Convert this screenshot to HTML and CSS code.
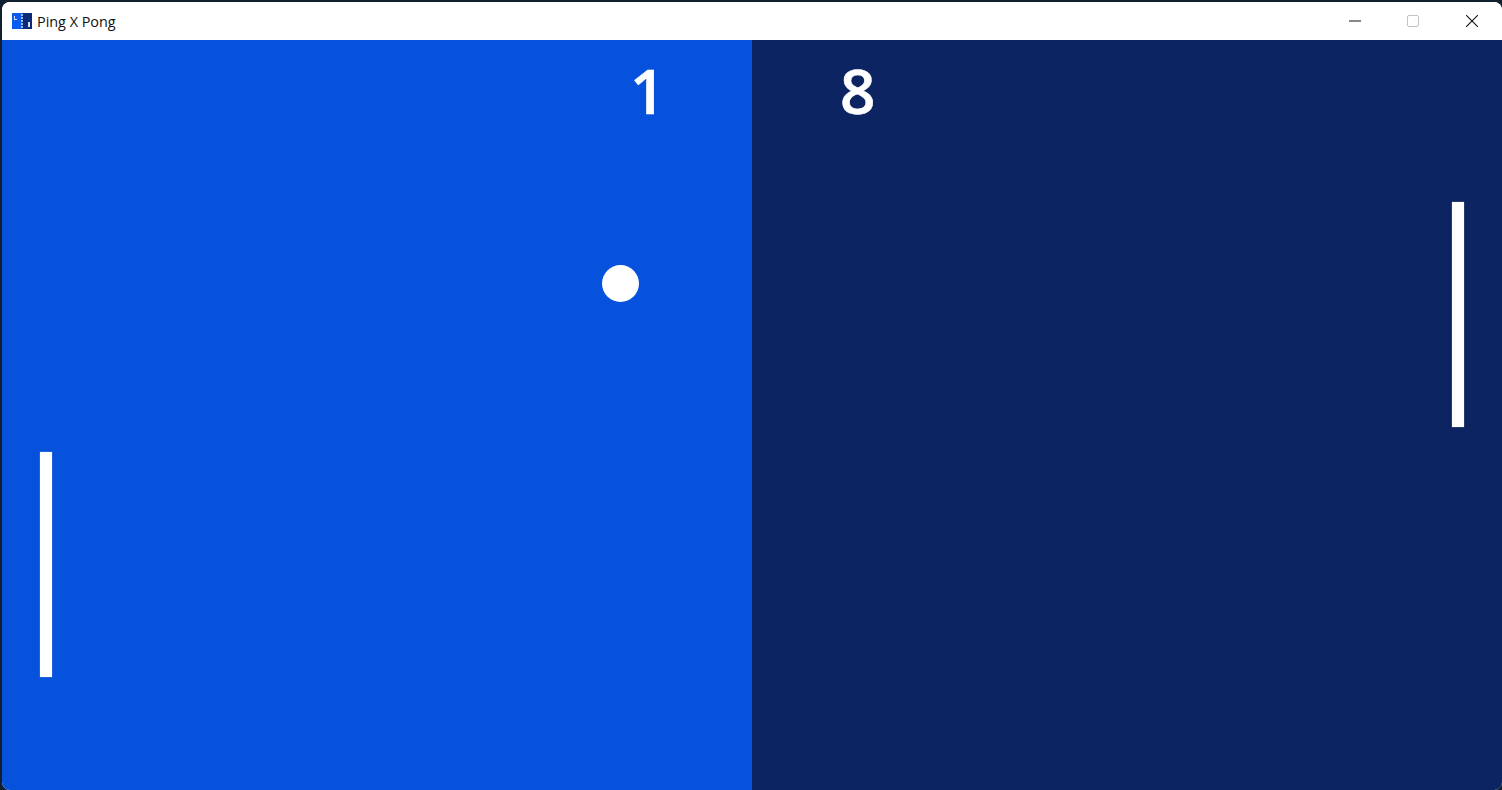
FILE: index.html
```html
<!DOCTYPE html>
<html>
<head>
  <meta charset="utf-8">
  <meta name="viewport" content="width=device-width">
  <title>Ping X Pong</title>
  <link rel="stylesheet" href="styles.css">
</head>
<body>

  <div class="window">
    <div class="titlebar">
      <svg class="app-icon" width="20" height="16" viewBox="0 0 20 16">
        <rect width="10" height="16" fill="#0a5cf0"/>
        <rect x="10" width="10" height="16" fill="#0c2a78"/>
        <rect x="2" y="3" width="1" height="4" fill="#cfe0ff"/>
        <rect x="3" y="6" width="2" height="1" fill="#cfe0ff"/>
        <rect x="16" y="9" width="2" height="5" fill="#d5def0"/>
        <path d="M10 1v2M10 4v2M10 7v2M10 10v2M10 13v2" stroke="#9dbcf2" stroke-width="2"/>
      </svg>
      <span class="app-title">Ping X Pong</span>
      <div class="controls">
        <button class="ctl">
          <svg width="12" height="12" viewBox="0 0 12 12"><path d="M0 6h12" stroke="#111" stroke-width="1"/></svg>
        </button>
        <button class="ctl">
          <svg width="12" height="12" viewBox="0 0 12 12"><rect x="0.5" y="0.5" width="11" height="11" rx="1.5" fill="none" stroke="#c2c2c2" stroke-width="1"/></svg>
        </button>
        <button class="ctl ctl-close">
          <svg width="12" height="12" viewBox="0 0 12 12"><path d="M0 0l12 12M12 0L0 12" stroke="#111" stroke-width="1.1"/></svg>
        </button>
      </div>
    </div>

    <div class="game">
      <div class="side side-left"></div>
      <div class="side side-right"></div>
      <span class="score score-left">1</span>
      <span class="score score-right">8</span>
      <div class="ball"></div>
      <div class="paddle paddle-left"></div>
      <div class="paddle paddle-right"></div>
    </div>
  </div>

</body>
</html>
```

FILE: styles.css
```css
html, body {
  height: 100%;
  margin: 0;
}
body {
  background: #10202f;
  overflow: hidden;
  box-sizing: border-box;
  padding: 2px 0 0 2px;
}
.window {
  height: 788px;
  display: flex;
  flex-direction: column;
  border-radius: 8px;
  overflow: hidden;
  background: #fff;
}
.titlebar {
  height: 38px;
  display: flex;
  align-items: center;
  padding-left: 10px;
  background: #fff;
}
.app-icon {
  margin-right: 5px;
}
.app-title {
  font-family: "Open Sans", sans-serif;
  font-size: 14.4px;
  color: #111;
}
.controls {
  display: flex;
  margin-left: auto;
}
.ctl {
  width: 58px;
  height: 38px;
  padding: 0;
  border: none;
  background: none;
  display: flex;
  align-items: center;
  justify-content: center;
}
.ctl-close {
  width: 60px;
}
.game {
  flex: 1;
  display: flex;
  position: relative;
}
.side {
  flex: 1;
}
.side-left {
  background: #0652dd;
}
.side-right {
  background: #0c2461;
}
.score {
  position: absolute;
  top: 12px;
  font-family: "Open Sans", sans-serif;
  font-size: 62px;
  font-weight: 600;
  line-height: 76px;
  color: #fff;
  -webkit-text-stroke: 0.6px #fff;
}
.score-left {
  left: 628px;
}
.score-right {
  left: 838px;
}
.ball {
  position: absolute;
  left: 600px;
  top: 225px;
  width: 37px;
  height: 37px;
  border-radius: 50%;
  background: #fff;
}
.paddle {
  position: absolute;
  width: 12px;
  height: 225px;
  background: #fff;
  box-shadow: 0 0 1px rgba(255, 255, 255, 0.6);
}
.paddle-left {
  left: 38px;
  top: 412px;
}
.paddle-right {
  left: 1450px;
  top: 162px;
}
```
